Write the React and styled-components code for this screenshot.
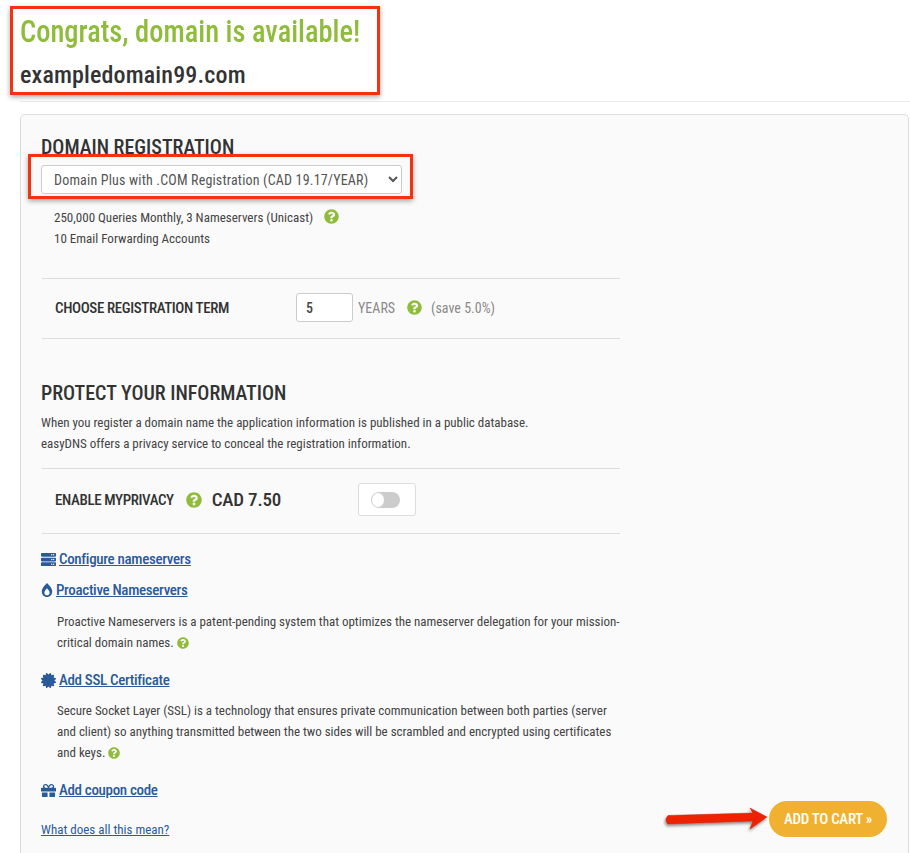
import React from 'react'
import styled, { createGlobalStyle } from 'styled-components'
import { FaServer, FaBurn, FaCertificate, FaGift, FaQuestionCircle } from 'react-icons/fa'

const Global = createGlobalStyle`
  html, body { margin: 0; padding: 0; background: #fff; }
  body {
    font-family: Roboto, "Liberation Sans", sans-serif;
    font-stretch: 85%;
    color: #333;
  }
  input, select, button { font-stretch: 85%; }
  #root { width: 910px; height: 853px; overflow: hidden; }
`

const Help = ({ size = 15, gap = 0 }) => (
  <HelpIcon $gap={gap}><FaQuestionCircle size={size} /></HelpIcon>
)

export default function App() {
  return (
    <Page>
      <Global />
      <Header>
        <HeaderBox>
          <Congrats>Congrats, domain is available!</Congrats>
          <DomainName>exampledomain99.com</DomainName>
        </HeaderBox>
      </Header>
      <Panel>
        <SectionTitle>DOMAIN REGISTRATION</SectionTitle>
        <SelectBox>
          <PlanSelect defaultValue="plus">
            <option value="plus">Domain Plus with .COM Registration (CAD 19.17/YEAR)</option>
          </PlanSelect>
        </SelectBox>
        <PlanDetails>
          <div>250,000 Queries Monthly, 3 Nameservers (Unicast) <Help gap={8} /></div>
          <div>10 Email Forwarding Accounts</div>
        </PlanDetails>

        <TermRow>
          <RowLabel $width={241}>CHOOSE REGISTRATION TERM</RowLabel>
          <TermInput defaultValue="5" />
          <Muted>YEARS</Muted>
          <Help size={15} gap={12} />
          <Muted $gap={9}>(save 5.0%)</Muted>
        </TermRow>

        <ProtectTitle>PROTECT YOUR INFORMATION</ProtectTitle>
        <ProtectText>
          When you register a domain name the application information is published in a public database.
          <br />
          easyDNS offers a privacy service to conceal the registration information.
        </ProtectText>

        <PrivacyRow>
          <RowLabel>ENABLE MYPRIVACY</RowLabel>
          <Help size={16} gap={12} />
          <Price>CAD 7.50</Price>
          <SwitchBox>
            <Switch><Knob /></Switch>
          </SwitchBox>
        </PrivacyRow>

        <LinkLine $top={16}>
          <LinkIcon $width={15}><FaServer size={15} /></LinkIcon>
          <IconLink href="#">Configure nameservers</IconLink>
        </LinkLine>
        <LinkLine $top={13}>
          <LinkIcon $width={12}><FaBurn size={14} /></LinkIcon>
          <IconLink href="#">Proactive Nameservers</IconLink>
        </LinkLine>
        <Blurb $top={12}>
          Proactive Nameservers is a patent-pending system that optimizes the nameserver delegation for your mission-critical domain names. <Help size={12} />
        </Blurb>
        <LinkLine $top={18}>
          <LinkIcon $width={15}><FaCertificate size={15} /></LinkIcon>
          <IconLink href="#">Add SSL Certificate</IconLink>
        </LinkLine>
        <Blurb $top={11}>
          Secure Socket Layer (SSL) is a technology that ensures private communication between both parties (server and client) so anything transmitted between the two sides will be scrambled and encrypted using certificates and keys. <Help size={12} />
        </Blurb>
        <LinkLine $top={18}>
          <LinkIcon $width={15}><FaGift size={15} /></LinkIcon>
          <IconLink href="#">Add coupon code</IconLink>
        </LinkLine>

        <Footer>
          <MeanLink href="#">What does all this mean?</MeanLink>
          <CartWrap>
            <CartArrow width="110" height="34" viewBox="0 0 110 34">
              <defs>
                <filter id="arrowShadow" x="-10%" y="-30%" width="125%" height="170%">
                  <feDropShadow dx="-1" dy="2" stdDeviation="1.5" floodColor="#000" floodOpacity="0.45" />
                </filter>
              </defs>
              <path
                d="M5 12.5 L90 10 L87 5 L104 14 L87 26 L90 18 L5 21 Q1 17 5 12.5 Z"
                fill="#ee2400"
                stroke="#c81d00"
                strokeWidth="0.5"
                filter="url(#arrowShadow)"
              />
            </CartArrow>
            <CartButton>ADD TO CART »</CartButton>
          </CartWrap>
        </Footer>
      </Panel>
    </Page>
  )
}

const Page = styled.div`
  width: 910px;
  height: 853px;
  overflow: hidden;
`

const Header = styled.div`
  margin-left: 20px;
  height: 95px;
  border-bottom: 1px solid #eaeaea;
  padding-top: 6px;
`

const HeaderBox = styled.div`
  box-sizing: border-box;
  margin-left: -10px;
  width: 370px;
  height: 89px;
  padding: 4px 0 0 7px;
  border: 3px solid #f5310f;
  box-shadow: 0 2px 5px rgba(0, 0, 0, 0.35);
`

const Congrats = styled.h1`
  margin: 0;
  font-size: 32px;
  font-stretch: 75%;
  line-height: 36px;
  font-weight: 500;
  white-space: nowrap;
  transform: scaleX(0.89);
  transform-origin: left;
  color: #8fbc3a;
`

const DomainName = styled.div`
  margin-top: 12px;
  font-size: 24px;
  line-height: 28px;
  font-weight: 500;
  letter-spacing: 0.15px;
  white-space: nowrap;
  color: #333;
`

const Panel = styled.div`
  box-sizing: border-box;
  margin: 12px 0 0 20px;
  width: 889px;
  height: 760px;
  padding: 20px 0 0 20px;
  background: #fafafa;
  border: 1px solid #dddddd;
  border-radius: 5px;
`

const SectionTitle = styled.h2`
  margin: 0;
  font-size: 20px;
  font-stretch: 75%;
  line-height: 24px;
  font-weight: 500;
  color: #333;
`

const SelectBox = styled.div`
  box-sizing: border-box;
  margin: -5px 0 0 -13px;
  width: 385px;
  height: 45px;
  padding: 8px 0 0 10px;
  border: 3px solid #f5310f;
  box-shadow: 0 2px 5px rgba(0, 0, 0, 0.35);
`

const PlanSelect = styled.select`
  box-sizing: border-box;
  display: block;
  width: 361px;
  height: 29px;
  padding: 0 0 0 8px;
  font-family: Roboto, sans-serif;
  font-size: 14px;
  letter-spacing: 0.18px;
  color: #555;
  background: #fff;
  border: 1px solid #ccc;
  border-radius: 3px;
`

const PlanDetails = styled.div`
  margin: 8px 0 0 13px;
  font-size: 13px;
  line-height: 21px;
  color: #444;
`

const HelpIcon = styled.span`
  display: inline-flex;
  vertical-align: -2px;
  margin-left: ${p => p.$gap}px;
  color: #8fbc3a;
`

const TermRow = styled.div`
  box-sizing: border-box;
  display: flex;
  align-items: center;
  margin: 29px 0 0 1px;
  width: 578px;
  height: 61px;
  padding: 0 0 2px 13px;
  border-top: 1px solid #dddddd;
  border-bottom: 1px solid #dddddd;
`

const RowLabel = styled.div`
  ${p => (p.$width ? `width: ${p.$width}px;` : '')}
  font-size: 15px;
  font-weight: 500;
  letter-spacing: -0.38px;
  color: #333;
`

const TermInput = styled.input`
  box-sizing: border-box;
  width: 57px;
  height: 29px;
  margin-right: 5px;
  padding: 0 0 0 9px;
  font-family: Roboto, sans-serif;
  font-size: 14px;
  font-weight: 500;
  color: #444;
  background: #fff;
  border: 1px solid #ccc;
  border-radius: 3px;
`

const Muted = styled.span`
  margin-left: ${p => p.$gap || 0}px;
  font-size: 14px;
  color: #8a8a8a;
`

const ProtectTitle = styled.h2`
  margin: 42px 0 0;
  font-size: 20px;
  font-stretch: 75%;
  line-height: 24px;
  font-weight: 500;
  color: #333;
`

const ProtectText = styled.p`
  margin: 7px 0 0;
  font-size: 13px;
  line-height: 21px;
  letter-spacing: -0.02px;
  color: #444;
`

const PrivacyRow = styled.div`
  box-sizing: border-box;
  display: flex;
  align-items: center;
  margin: 14px 0 0 1px;
  width: 578px;
  height: 66px;
  padding: 0 0 3px 13px;
  border-top: 1px solid #dddddd;
  border-bottom: 1px solid #dddddd;
`

const Price = styled.div`
  margin-left: 10px;
  font-size: 19px;
  font-weight: 500;
  letter-spacing: -0.2px;
  color: #333;
`

const SwitchBox = styled.div`
  box-sizing: border-box;
  display: flex;
  align-items: center;
  width: 58px;
  height: 33px;
  margin-left: 77px;
  padding-left: 12px;
  background: #fff;
  border: 1px solid #ddd;
  border-radius: 3px;
`

const Switch = styled.div`
  display: flex;
  align-items: center;
  width: 29px;
  height: 16px;
  padding-left: 1px;
  box-sizing: border-box;
  background: #ccc;
  border-radius: 8px;
`

const Knob = styled.div`
  width: 12px;
  height: 14px;
  background: #fff;
  border-radius: 50%;
`

const LinkLine = styled.div`
  display: flex;
  align-items: center;
  gap: 3px;
  margin-top: ${p => p.$top}px;
  height: 18px;
`

const LinkIcon = styled.span`
  display: inline-flex;
  justify-content: center;
  width: ${p => p.$width}px;
  color: #2a5a9a;
`

const IconLink = styled.a`
  font-size: 15px;
  font-weight: 500;
  letter-spacing: -0.33px;
  color: #2a5a9a;
`

const Blurb = styled.p`
  margin: ${p => p.$top}px 0 0 16px;
  width: 565px;
  font-size: 13px;
  line-height: 21px;
  letter-spacing: -0.02px;
  color: #444;
`

const Footer = styled.div`
  display: flex;
  justify-content: space-between;
  align-items: flex-end;
  margin-top: 2px;
  width: 846px;
`

const MeanLink = styled.a`
  font-size: 13px;
  color: #2a5a9a;
`

const CartWrap = styled.div`
  position: relative;
`

const CartArrow = styled.svg`
  position: absolute;
  left: -106px;
  top: 2px;
`

const CartButton = styled.button`
  display: block;
  width: 118px;
  height: 36px;
  padding: 0;
  font-family: Roboto, sans-serif;
  font-size: 15px;
  font-weight: 500;
  letter-spacing: -0.3px;
  color: #fff;
  background: #efb12f;
  border: none;
  border-radius: 18px;
`
